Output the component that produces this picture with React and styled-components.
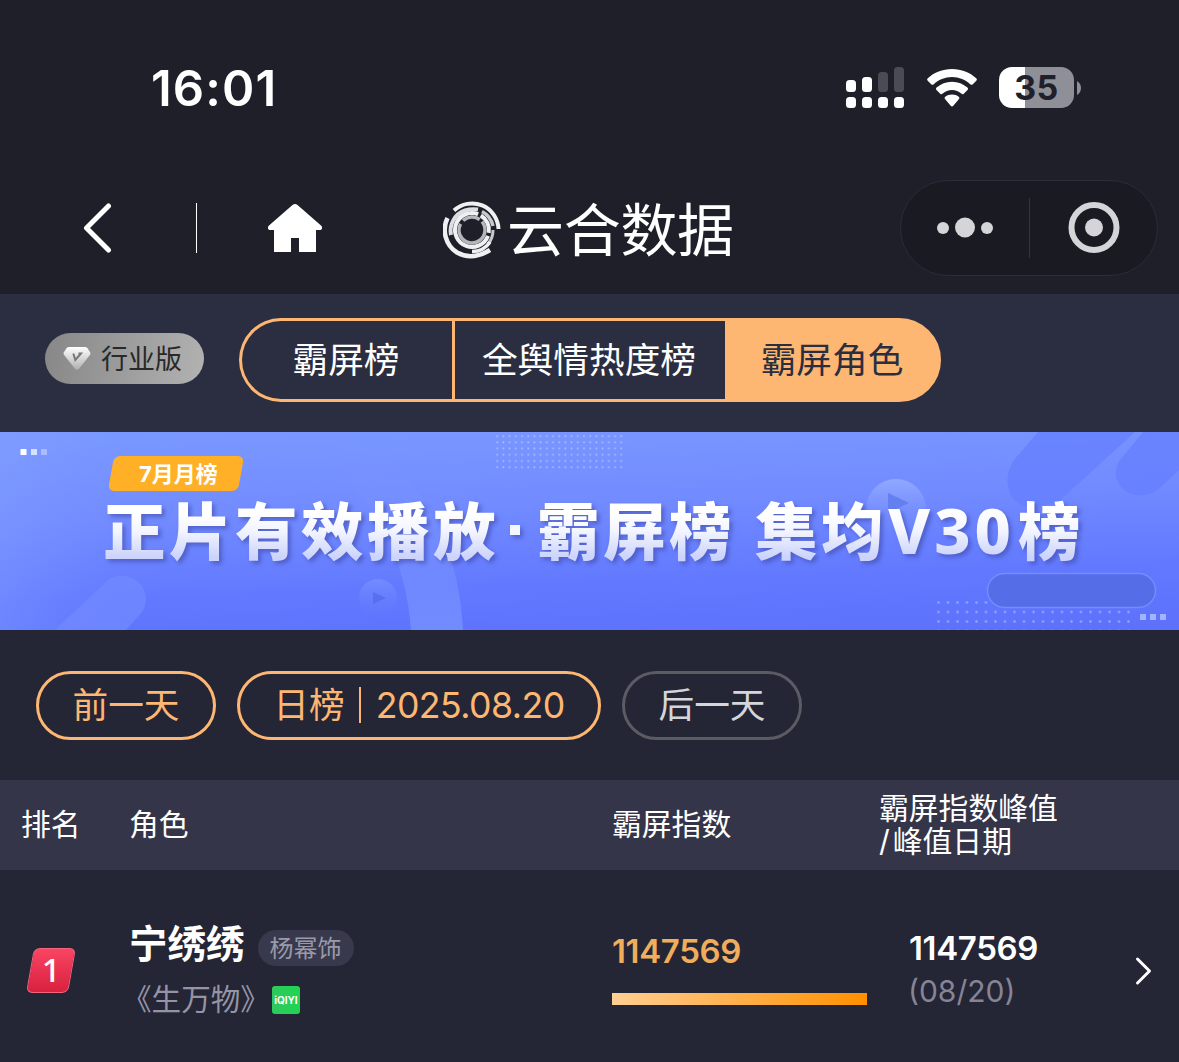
import React from "react";
import styled, { createGlobalStyle } from "styled-components";

const ORANGE = "#fdb772";

const GlobalStyle = createGlobalStyle`
  * { box-sizing: border-box; }
  body {
    margin: 0;
    background: #242535;
    color: #fff;
    font-family: Inter, "Noto Sans CJK SC", sans-serif;
    overflow: hidden;
  }
  svg { display: block; flex: none; }
`;

const Screen = styled.main`
  width: 1179px;
  height: 1062px;
  display: flex;
  flex-direction: column;
  overflow: hidden;
`;

/* Status bar */
const StatusBar = styled.header`
  height: 162px;
  padding: 13px 98px 0 151px;
  background: #1f1f29;
  display: flex;
  align-items: center;
  justify-content: space-between;
  flex: none;
`;
const Clock = styled.time`
  font-size: 49px;
  font-weight: 600;
  line-height: 60px;
  letter-spacing: 1.1px;
  margin-top: 2px;
`;
const StatusIcons = styled.div`
  display: flex;
  align-items: center;
`;
const Battery = styled.div`
  width: 75px;
  height: 41px;
  margin-left: 22px;
  border-radius: 13px;
  background: linear-gradient(90deg, #fff 0 26px, #8f8f97 26px);
  color: #20202a;
  font-size: 34px;
  font-weight: 700;
  line-height: 42px;
  letter-spacing: 0.4px;
  text-align: center;
`;
const BatteryTip = styled.svg`
  margin-left: 3px;
`;
const WifiIcon = styled.svg`
  margin-left: 23px;
`;

/* Navigation */
const NavBar = styled.nav`
  height: 132px;
  padding: 18px 21px 18px 82px;
  background: #1f1f29;
  display: flex;
  align-items: center;
  flex: none;
`;
const NavDivider = styled.span`
  width: 1px;
  height: 50px;
  margin: 0 71px 0 83px;
  background: #fff;
`;
const Brand = styled.h1`
  margin: 3px 0 0 121px;
  display: flex;
  align-items: center;
  font-size: 57px;
  font-weight: 400;
  line-height: 66px;
  letter-spacing: -0.3px;
  gap: 6px;
`;
const BrandName = styled.span`
  padding-top: 3px;
`;
const Capsule = styled.div`
  width: 258px;
  height: 96px;
  margin-left: auto;
  border: 1px solid #2c2c36;
  border-radius: 48px;
  background: #1a1a23;
  display: flex;
  align-items: center;
`;
const CapsuleHalf = styled.div`
  flex: 1;
  display: flex;
  justify-content: center;
`;
const CapsuleDivider = styled.span`
  width: 1px;
  height: 60px;
  background: #34343d;
`;

/* Tabs */
const TabBar = styled.section`
  height: 138px;
  padding: 0 45px 6px;
  background: #2b2e40;
  display: flex;
  align-items: center;
  gap: 35px;
  flex: none;
`;
const Edition = styled.div`
  width: 159px;
  height: 51px;
  margin-top: -4px;
  padding-left: 18px;
  border-radius: 26px;
  background: linear-gradient(100deg, #878787, #b2b2b2);
  color: #292929;
  display: flex;
  align-items: center;
  gap: 10px;
  font-size: 27px;
  line-height: 53px;
`;
const EditionName = styled.span`
  padding-top: 2px;
`;
const Tabs = styled.div`
  width: 702px;
  height: 84px;
  border-radius: 42px;
  display: flex;
`;
const Tab = styled.div`
  width: ${(p) => p.$width}px;
  padding-right: 2px;
  border: 3px solid ${ORANGE};
  border-right-width: ${(p) => (p.$active ? 3 : 0)}px;
  border-radius: ${(p) => (p.$first ? "42px 0 0 42px" : p.$active ? "0 42px 42px 0" : "0")};
  background: ${(p) => (p.$active ? ORANGE : "transparent")};
  color: ${(p) => (p.$active ? "#2b2e40" : "#fff")};
  font-size: 35.7px;
  line-height: 78px;
  text-align: center;
`;

/* Banner */
const Banner = styled.section`
  position: relative;
  height: 198px;
  padding: 24px 0 0 103px;
  background: linear-gradient(178deg, #7a99ff 0%, #728bff 38%, #6279ff 72%, #5d70fb 100%);
  overflow: hidden;
  flex: none;
`;
const BannerArt = styled.svg`
  position: absolute;
  inset: 0;
`;
const MonthTag = styled.div`
  position: relative;
  width: 130px;
  height: 35px;
  margin-left: 8px;
  border-radius: 6px;
  background: #ffb026;
  transform: skewX(-10deg);
  text-align: center;
  font-size: 22px;
  font-weight: 700;
  line-height: 36px;
  span {
    display: block;
    transform: skewX(10deg);
    margin-left: 5px;
  }
`;
const Headline = styled.h2`
  position: relative;
  margin: 0;
  display: flex;
  font-family: "Noto Sans", "Noto Sans CJK SC", sans-serif;
  font-size: 62.5px;
  font-weight: 900;
  line-height: 80px;
  white-space: nowrap;
  filter: drop-shadow(3px 3px 2px rgba(60, 70, 160, 0.55));
`;
const HeadlinePart = styled.span`
  margin-left: ${(p) => p.$gap || 0}px;
  letter-spacing: 3.5px;
  color: transparent;
  background: linear-gradient(#fff 28%, #f3f5ff 50%, #cdd4fb 82%);
  background-clip: text;
  -webkit-background-clip: text;
`;
const HeadlineCode = styled(HeadlinePart)`
  width: 130px;
  font-size: 63px;
  font-weight: 800;
  letter-spacing: 4px;
  margin: -1px 0 1px 1px;
`;
const Dot = styled.span`
  width: 10px;
  height: 10px;
  margin: 34px 17px 0 11px;
  background: #f5f7ff;
`;

/* Date filters */
const Filters = styled.section`
  height: 150px;
  padding: 0 36px;
  display: flex;
  align-items: center;
  gap: 21px;
  flex: none;
`;
const Pill = styled.button`
  width: ${(p) => p.$width}px;
  height: 69px;
  padding: 0;
  border: 3px solid ${(p) => (p.$muted ? "#5b5b63" : ORANGE)};
  border-radius: 35px;
  background: transparent;
  color: ${(p) => (p.$muted ? "#d5d5dc" : ORANGE)};
  font: inherit;
  font-size: 35.7px;
  line-height: 60px;
  display: flex;
  justify-content: center;
  align-items: center;
`;
const PillRule = styled.span`
  width: 2px;
  height: 36px;
  margin: 0 15px 0 14px;
  background: ${ORANGE};
`;
const PillDate = styled.span`
  font-weight: 400;
  letter-spacing: -0.55px;
`;

/* Table */
const COLUMNS = "108px 483px 267px 1fr";
const TableHead = styled.div`
  height: 90px;
  padding: 0 0 1px 21px;
  background: #353549;
  display: grid;
  grid-template-columns: ${COLUMNS};
  align-items: center;
  font-size: 29.8px;
  line-height: 33px;
  color: #fff;
  flex: none;
`;
const HeadCell = styled.span`
  padding-bottom: ${(p) => (p.$double ? 0 : 1)}px;
`;
const Slash = styled.span`
  letter-spacing: 3px;
`;
const TableRow = styled.div`
  height: 192px;
  padding-left: 21px;
  display: grid;
  grid-template-columns: ${COLUMNS};
  align-items: start;
  flex: none;
`;
const Rank = styled.div`
  width: 42px;
  height: 45px;
  margin: 78px 0 0 9px;
  border-radius: 6px;
  border: 1px solid #f4647c;
  background: linear-gradient(#f94563, #d9203f);
  transform: skewX(-10deg);
  font-family: "Noto Sans", sans-serif;
  font-size: 33px;
  font-weight: 500;
  line-height: 42px;
  text-align: center;
  span {
    display: block;
    transform: skewX(10deg);
  }
`;
const Role = styled.div`
  padding-top: 49px;
`;
const RoleLine = styled.div`
  display: flex;
  align-items: center;
  height: 50px;
`;
const RoleName = styled.strong`
  font-size: 38.5px;
  line-height: 50px;
  font-weight: 700;
`;
const Actor = styled.span`
  height: 36px;
  margin: 8px 0 0 13px;
  padding: 0 12px;
  border-radius: 18px;
  background: #38394c;
  color: #9999a9;
  font-size: 24px;
  line-height: 38px;
`;
const ShowLine = styled.div`
  display: flex;
  align-items: center;
  height: 60px;
  margin-left: -7px;
  color: #9494a4;
  font-size: 29.6px;
  line-height: 44px;
  gap: 2px;
`;
const ShowName = styled.span`
  padding-bottom: 1px;
`;
const Platform = styled.span`
  width: 28px;
  height: 28px;
  margin-top: 2px;
  border-radius: 3px;
  background: linear-gradient(90deg, #2fc95c, #1fd452);
  color: #fff;
  font-size: 10px;
  font-weight: 700;
  line-height: 28px;
  text-align: center;
`;
const Score = styled.div`
  padding-top: 61px;
  font-size: 33px;
  font-weight: 600;
  line-height: 40px;
  color: #f0ad5c;
`;
const Digits = styled.span`
  letter-spacing: -0.35px;
`;
const Meter = styled.div`
  width: 255px;
  height: 12px;
  margin-top: 22px;
  background: linear-gradient(90deg, #ffcf93, #ff9000);
`;
const Peak = styled.div`
  display: flex;
  padding: 58px 27px 0 30px;
  justify-content: space-between;
  font-size: 33px;
  font-weight: 600;
  line-height: 40px;
`;
const PeakDate = styled.div`
  font-size: 30px;
  font-weight: 400;
  line-height: 46px;
  margin-left: -1px;
  color: #858596;
`;
const Next = styled.svg`
  margin-top: 28px;
`;

const Signal = () => (
  <svg width="58" height="41" fill="#fff">
    <rect x="0" y="13" width="10" height="12" rx="3.5" />
    <rect x="16" y="10" width="10" height="15" rx="3.5" />
    <rect x="32" y="5" width="10" height="20" rx="3.5" fill="#4b4b54" />
    <rect x="48" y="0" width="10" height="25" rx="3.5" fill="#4b4b54" />
    {[0, 16, 32, 48].map((x) => (
      <rect key={x} x={x} y="30" width="10" height="11" rx="3.5" />
    ))}
  </svg>
);

const Wifi = () => (
  <WifiIcon width="50" height="38" viewBox="0 0 50 38" fill="#fff">
    <path d="M25 0C15.500 0 7.200 3.500 .8 9.200c-.9.800-.9 1.700-.1 2.500l3.500 3.600c.7.700 1.500.7 2.300.1C11.500 10.800 17.800 8 25 8s13.500 2.800 18.500 7.400c.8.600 1.600.6 2.300-.1l3.500-3.600c.8-.8.800-1.700-.1-2.500C42.800 3.500 34.500 0 25 0z" />
    <path d="M25 12.700c-6 0-11.300 2.200-15.400 5.900-.8.700-.9 1.600-.1 2.400l3.700 3.700c.7.700 1.500.7 2.200.1 2.600-2.300 6-3.700 9.600-3.700s7 1.400 9.600 3.700c.7.600 1.500.6 2.200-.1l3.700-3.700c.8-.8.700-1.700-.1-2.400C36.300 14.900 31 12.700 25 12.700z" />
    <path d="M25 25.500c-2.600 0-4.900.8-6.700 2.300-.9.700-.9 1.600-.1 2.400l5.500 6.600c.8.900 1.800.9 2.600 0l5.500-6.600c.8-.8.800-1.700-.1-2.400-1.800-1.500-4.100-2.300-6.700-2.300z" />
  </WifiIcon>
);

const Logo = () => (
  <svg width="58" height="58" viewBox="0 0 58 58" fill="none" stroke="#f0f0f2">
    <path d="M4.500 17A27 27 0 0 0 14 51.500Q29 60 47 49" strokeWidth="4.500" />
    <path d="M11 9.500A26.500 26.500 0 0 1 55.500 28" strokeWidth="4" />
    <path d="M8 34A21.500 21.500 0 0 1 22 9.500Q28 7.500 35 8.500" strokeWidth="4" stroke="#dedee2" />
    <path d="M39 10.500A21.500 21.500 0 0 1 50 25" strokeWidth="3.500" stroke="#c8c8ce" />
    <path d="M50 29A21 21 0 0 1 45 43" strokeWidth="3" stroke="#c8c8ce" />
    <path d="M29 50.500A21.500 21.500 0 0 0 47 41" strokeWidth="3.500" />
    <circle cx="29" cy="29" r="17" strokeWidth="4" strokeDasharray="80 3 20 4" transform="rotate(20 29 29)" />
    <circle cx="29" cy="29" r="13" strokeWidth="3.500" stroke="#b5b5bc" strokeDasharray="56 4 18 4" transform="rotate(-40 29 29)" />
  </svg>
);

const Diamond = () => (
  <svg width="28" height="25" viewBox="0 0 28 25">
    <defs>
      <linearGradient id="gem" x2="0" y2="1">
        <stop stopColor="#fff" />
        <stop offset="1" stopColor="#b0b0b0" />
      </linearGradient>
    </defs>
    <path d="M6 1h16q1.500 0 2.500 1.200l2.600 4q.9 1.400-.2 2.800L16 22.700q-2 2-4 0L1.100 9Q0 7.600.9 6.200l2.600-4Q4.500 1 6 1z" fill="url(#gem)" />
    <path d="M10.300 7.500l2 6.500 5.700-6.500h-2.500" fill="none" stroke="#777" strokeWidth="2" />
  </svg>
);

const Art = () => (
  <BannerArt width="1179" height="198">
    <defs>
      <pattern id="dotsTop" x="496" y="3" width="6.200" height="6.200" patternUnits="userSpaceOnUse">
        <circle cx="1.200" cy="1.200" r="1" fill="#a9bcff" />
      </pattern>
      <pattern id="dotsBottom" x="937" y="169" width="9.500" height="9.500" patternUnits="userSpaceOnUse">
        <circle cx="1.500" cy="1.500" r="1.300" fill="#93a5ff" />
      </pattern>
      <linearGradient id="bubble" x2="0" y2="1">
        <stop stopColor="#91a9ff" />
        <stop offset="1" stopColor="#7189ff" stopOpacity="0" />
      </linearGradient>
      <linearGradient id="band" x2="0" y2="1">
        <stop stopColor="#7e95ff" stopOpacity="0" />
        <stop offset="1" stopColor="#7893ff" stopOpacity=".75" />
      </linearGradient>
      <linearGradient id="edge" x2="1" y2="0">
        <stop stopColor="#86a4ff" stopOpacity=".35" />
        <stop offset="1" stopColor="#7c98ff" stopOpacity="0" />
      </linearGradient>
    </defs>
    <rect width="130" height="198" fill="url(#edge)" />
    <path d="M55 198L108 148C130 134 156 158 142 180L126 198z" fill="#7088ff" opacity=".8" />
    <path d="M265 0C350 20 405 105 411 198H463C458 95 405 25 340 0z" fill="url(#band)" />
    <path d="M1038 0L1014 28C998 52 1014 79 1034 75L1058 70L1135 0z" fill="#667fff" opacity=".75" />
    <path d="M1143 0L1120 28C1105 52 1134 76 1160 56L1179 38V0z" fill="#667fff" opacity=".75" />
    <rect x="496" y="3" width="127" height="35" fill="url(#dotsTop)" />
    <rect x="937" y="169" width="195" height="29" fill="url(#dotsBottom)" />
    <rect x="20.500" y="17" width="6" height="6" fill="#fff" />
    <rect x="31" y="17" width="6" height="6" fill="#fff" opacity=".7" />
    <rect x="41" y="17" width="6" height="6" fill="#fff" opacity=".35" />
    <circle cx="378" cy="166" r="19" fill="url(#bubble)" opacity=".35" />
    <path d="M373 160v12l13-6z" fill="#5269e9" opacity=".7" />
    <ellipse cx="896" cy="77" rx="30" ry="30" fill="url(#bubble)" />
    <path d="M888 61v20l21-10z" fill="#647fee" />
    <rect x="987.500" y="141.500" width="168" height="34" rx="17" fill="#556ee8" stroke="#738cff" strokeWidth="1.500" />
    {[1140, 1150, 1160].map((x) => (
      <rect key={x} x={x} y="182" width="6" height="6" fill="#a2b4ff" />
    ))}
  </BannerArt>
);

export default function App() {
  return (
    <Screen>
      <GlobalStyle />
      <StatusBar>
        <Clock>16:01</Clock>
        <StatusIcons>
          <Signal />
          <Wifi />
          <Battery>35</Battery>
          <BatteryTip width="4" height="14">
            <path d="M0 0Q4 2.500 4 7T0 14z" fill="#8f8f97" />
          </BatteryTip>
        </StatusIcons>
      </StatusBar>

      <NavBar>
        <svg width="31" height="50" fill="none" stroke="#fff" strokeWidth="5" strokeLinecap="round" strokeLinejoin="round">
          <path d="M26.500 3L4.500 25l22 22" />
        </svg>
        <NavDivider />
        <svg width="54" height="48" fill="#fff">
          <path d="M24.500 1q2.500-2 5 0L53 21.500q1.500 1.500 1 3-.5 1.500-2 1.500h-4v22H31V34h-8v14H6V26H2q-1.500 0-2-1.500-.5-1.500 1-3z" />
        </svg>
        <Brand>
          <Logo />
          <BrandName>云合数据</BrandName>
        </Brand>
        <Capsule>
          <CapsuleHalf>
            <svg width="56" height="22" fill="#d5d5d9">
              <circle cx="6" cy="11" r="6" />
              <circle cx="28" cy="10.500" r="10" />
              <circle cx="50" cy="11" r="6" />
            </svg>
          </CapsuleHalf>
          <CapsuleDivider />
          <CapsuleHalf>
            <svg width="54" height="52" fill="#d5d5d9">
              <circle cx="28" cy="25.500" r="22.500" fill="none" stroke="#d5d5d9" strokeWidth="6" />
              <circle cx="28" cy="25.500" r="9" />
            </svg>
          </CapsuleHalf>
        </Capsule>
      </NavBar>

      <TabBar>
        <Edition>
          <Diamond />
          <EditionName>行业版</EditionName>
        </Edition>
        <Tabs>
          <Tab $width={213} $first>霸屏榜</Tab>
          <Tab $width={273}>全舆情热度榜</Tab>
          <Tab $width={216} $active>霸屏角色</Tab>
        </Tabs>
      </TabBar>

      <Banner>
        <Art />
        <MonthTag><span>7月月榜</span></MonthTag>
        <Headline>
          <HeadlinePart>正片有效播放</HeadlinePart>
          <Dot />
          <HeadlinePart>霸屏榜</HeadlinePart>
          <HeadlinePart $gap={20}>集均</HeadlinePart>
          <HeadlineCode>V30</HeadlineCode>
          <HeadlinePart>榜</HeadlinePart>
        </Headline>
      </Banner>

      <Filters>
        <Pill $width={180}>前一天</Pill>
        <Pill $width={364}>
          日榜
          <PillRule />
          <PillDate>2025.08.20</PillDate>
        </Pill>
        <Pill $width={180} $muted>后一天</Pill>
      </Filters>

      <TableHead>
        <HeadCell>排名</HeadCell>
        <HeadCell>角色</HeadCell>
        <HeadCell>霸屏指数</HeadCell>
        <HeadCell $double>霸屏指数峰值<br /><Slash>/</Slash>峰值日期</HeadCell>
      </TableHead>
      <TableRow>
        <Rank><span>1</span></Rank>
        <Role>
          <RoleLine>
            <RoleName>宁绣绣</RoleName>
            <Actor>杨幂饰</Actor>
          </RoleLine>
          <ShowLine>
            <ShowName>《生万物》</ShowName>
            <Platform>iQIYI</Platform>
          </ShowLine>
        </Role>
        <Score>
          <Digits>1147569</Digits>
          <Meter />
        </Score>
        <Peak>
          <div>
            <Digits>1147569</Digits>
            <PeakDate>(08/20)</PeakDate>
          </div>
          <Next width="17" height="30" fill="none" stroke="#fff" strokeWidth="3" strokeLinecap="round" strokeLinejoin="round">
            <path d="M2.500 3l12 12-12 12" />
          </Next>
        </Peak>
      </TableRow>
    </Screen>
  );
}
